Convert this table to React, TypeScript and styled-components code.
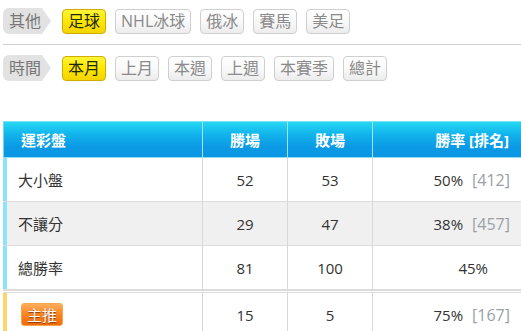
import React from 'react';
import styled, { createGlobalStyle } from 'styled-components';

const GlobalStyle = createGlobalStyle`
  html, body {
    margin: 0;
    padding: 0;
    background: #fff;
  }
  body {
    font-family: "Open Sans", "Noto Sans CJK TC", sans-serif;
    color: #333;
  }
`;

interface Row {
  name: string;
  win: number;
  lose: number;
  rate: string;
  rank?: number;
  featured?: boolean;
}

const sports = ['足球', 'NHL冰球', '俄冰', '賽馬', '美足'];
const periods = ['本月', '上月', '本週', '上週', '本賽季', '總計'];

const rows: Row[] = [
  { name: '大小盤', win: 52, lose: 53, rate: '50%', rank: 412 },
  { name: '不讓分', win: 29, lose: 47, rate: '38%', rank: 457 },
  { name: '總勝率', win: 81, lose: 100, rate: '45%' },
];

const picked: Row = { name: '主推', win: 15, lose: 5, rate: '75%', rank: 167, featured: true };

function FilterBar({ label, items, active }: { label: string; items: string[]; active: string }) {
  return (
    <FilterRow>
      <Tag>{label}</Tag>
      {items.map((item) => (
        <FilterButton key={item} $active={item === active}>
          {item}
        </FilterButton>
      ))}
    </FilterRow>
  );
}

function StatRow({ row, $stripe }: { row: Row; $stripe?: boolean }) {
  return (
    <BodyRow $stripe={$stripe} $featured={row.featured}>
      <NameCell>{row.featured ? <Badge>{row.name}</Badge> : row.name}</NameCell>
      <NumCell>{row.win}</NumCell>
      <NumCell>{row.lose}</NumCell>
      <RateCell $noRank={row.rank === undefined}>
        {row.rate}
        {row.rank !== undefined && <Rank>[{row.rank}]</Rank>}
      </RateCell>
    </BodyRow>
  );
}

export default function App() {
  return (
    <>
      <GlobalStyle />
      <Page>
        <FilterBar label="其他" items={sports} active="足球" />
        <Divider />
        <FilterBar label="時間" items={periods} active="本月" />
        <Table>
          <colgroup>
            <col style={{ width: 199 }} />
            <col style={{ width: 85 }} />
            <col style={{ width: 85 }} />
            <col />
          </colgroup>
          <thead>
            <tr>
              <HeadCell $align="left">運彩盤</HeadCell>
              <HeadCell>勝場</HeadCell>
              <HeadCell>敗場</HeadCell>
              <HeadCell $align="right">勝率 [排名]</HeadCell>
            </tr>
          </thead>
          <tbody>
            {rows.map((row, i) => (
              <StatRow key={row.name} row={row} $stripe={i % 2 === 1} />
            ))}
            <StatRow row={picked} />
          </tbody>
        </Table>
      </Page>
    </>
  );
}

const Page = styled.div`
  padding: 8px 0 0 3px;
  width: 518px;
`;

const FilterRow = styled.div`
  display: flex;
  align-items: center;
  gap: 9px;
  height: 26px;
`;

const Tag = styled.span`
  position: relative;
  display: inline-flex;
  align-items: center;
  height: 26px;
  box-sizing: border-box;
  padding: 0 1px 0 6px;
  margin-right: 11px;
  background: #e2e2e2;
  border-radius: 6px 0 0 6px;
  color: #777;
  font-size: 16px;
  line-height: 26px;

  &::after {
    content: '';
    position: absolute;
    left: 100%;
    top: 0;
    border-left: 9px solid #e2e2e2;
    border-top: 13px solid transparent;
    border-bottom: 13px solid transparent;
  }
`;

const FilterButton = styled.span<{ $active?: boolean }>`
  display: inline-flex;
  align-items: center;
  height: 25px;
  box-sizing: border-box;
  padding: 0 5px;
  border: 1px solid ${(p) => (p.$active ? '#cfae00' : '#cfcfcf')};
  border-radius: 4px;
  background: ${(p) =>
    p.$active
      ? 'linear-gradient(#fff53a, #ffe600 50%, #f3d400)'
      : 'linear-gradient(#ffffff, #f9f9f9 50%, #ececec)'};
  color: ${(p) => (p.$active ? '#1c2a10' : '#8a8a8a')};
  font-size: 16px;
  line-height: 23px;
  cursor: pointer;
`;

const Divider = styled.div`
  height: 1px;
  background: #cfcfcf;
  margin: 10px 0;
`;

const Table = styled.table`
  margin-top: 40px;
  width: 518px;
  table-layout: fixed;
  border-collapse: separate;
  border-spacing: 0;
  font-size: 15px;
`;

const HeadCell = styled.th<{ $align?: 'left' | 'right' }>`
  height: 35px;
  padding: 0 ${(p) => (p.$align === 'right' ? '12px' : '0')} 0 ${(p) => (p.$align === 'left' ? '17px' : '0')};
  text-align: ${(p) => p.$align ?? 'center'};
  color: #fff;
  font-weight: bold;
  background: linear-gradient(#27d8f4, #12b4ec 35%, #0b9ae5 70%, #0a95e2);
  border-top: 1px solid #7fe3f8;
  border-bottom: 1px solid #8fe0f7;
  border-left: 1px solid #a6e2f6;

  &:first-child {
    border-left: 1px solid #6fd8f4;
  }
`;

const BodyRow = styled.tr<{ $stripe?: boolean; $featured?: boolean }>`
  background: ${(p) => (p.$stripe ? '#f0f0f0' : '#fff')};

  td {
    height: 41px;
    border-bottom: 1px solid #dcdcdc;
    border-top: ${(p) => (p.$featured ? '3px double #dcdcdc' : '0')};
  }

  td:first-child {
    box-shadow: inset 4px 0 0 ${(p) => (p.$featured ? '#ffd36e' : '#8ee3fa')};
  }
`;

const NameCell = styled.td`
  padding: 0 0 0 15px;
  color: #333;
`;

const NumCell = styled.td`
  text-align: center;
  color: #333;
  border-left: 1px solid #d8d8d8;
`;

const RateCell = styled.td<{ $noRank?: boolean }>`
  text-align: right;
  padding-right: ${(p) => (p.$noRank ? '33px' : '11px')};
  color: #333;
  border-left: 1px solid #d8d8d8;
`;

const Rank = styled.span`
  margin-left: 9px;
  color: #9aa0a8;
  font-size: 16px;
`;

const Badge = styled.span`
  display: inline-block;
  height: 23px;
  line-height: 23px;
  box-sizing: border-box;
  padding: 0 5px;
  border: 1px solid #f5a64a;
  border-radius: 3px;
  background: linear-gradient(#ffae5c, #fa8422 50%, #f06a0a);
  color: #fff;
  text-shadow: 0 1px 1px #8a3a00;
  font-size: 15px;
  margin-left: 3px;
`;
